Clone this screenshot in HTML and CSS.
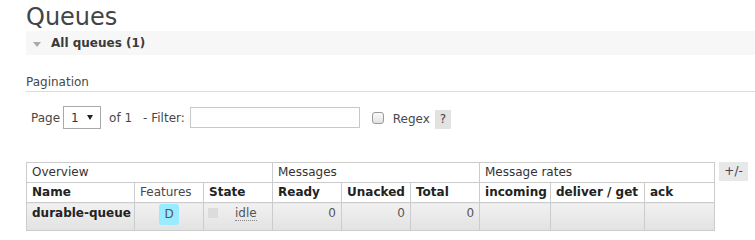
FILE: index.html
```html
<!DOCTYPE html>
<html lang="en">
<head>
    <meta charset="UTF-8">
    <title>Queues</title>
    <link rel="stylesheet" href="styles.css">
</head>
<body>
    <div id="main">
        <h1>Queues</h1>
        <div class="section">
            <h2 class="section-title"><span class="arrow"></span>All queues (1)</h2>
            <div class="hider">
                <h3>Pagination</h3>
                <div class="filter">
                    <span>Page</span>
                    <span class="select-wrap">
                        <select class="page-select">
                            <option>1</option>
                        </select>
                    </span>
                    <span class="of">of 1</span>
                    <span class="filter-label">- Filter:</span>
                    <input type="text" class="filter-input">
                    <input type="checkbox" class="regex-check" id="regex">
                    <label for="regex" class="regex-label">Regex</label>
                    <span class="help">?</span>
                </div>

                <div class="list-wrap">
                    <table class="list">
                        <colgroup>
                            <col class="c-name">
                            <col class="c-narrow">
                            <col class="c-narrow">
                            <col class="c-narrow">
                            <col class="c-narrow">
                            <col class="c-narrow">
                            <col class="c-incoming">
                            <col class="c-deliver">
                            <col class="c-ack">
                        </colgroup>
                        <thead>
                            <tr class="group-row">
                                <th colspan="3">Overview</th>
                                <th colspan="3">Messages</th>
                                <th colspan="3">Message rates</th>
                            </tr>
                            <tr class="head-row">
                                <th>Name</th>
                                <th class="plain">Features</th>
                                <th>State</th>
                                <th>Ready</th>
                                <th>Unacked</th>
                                <th>Total</th>
                                <th>incoming</th>
                                <th>deliver / get</th>
                                <th>ack</th>
                            </tr>
                        </thead>
                        <tbody>
                            <tr class="alt1">
                                <td class="name">durable-queue</td>
                                <td class="c"><abbr class="type" title="durable: true">D</abbr></td>
                                <td><span class="state-box"></span><abbr class="state" title="Idle since now">idle</abbr></td>
                                <td class="r">0</td>
                                <td class="r">0</td>
                                <td class="r">0</td>
                                <td></td>
                                <td></td>
                                <td></td>
                            </tr>
                        </tbody>
                    </table>
                    <span class="plus-minus">+/-</span>
                </div>
            </div>
        </div>
    </div>
</body>
</html>
```

FILE: styles.css
```css
* {
    box-sizing: border-box;
}

body {
    margin: 0;
    font-family: 'DejaVu Sans', Verdana, sans-serif;
    font-size: 12px;
    color: #484848;
    background-color: white;
}

#main {
    padding-left: 26px;
}

h1 {
    margin: 0;
    padding-top: 3px;
    font-size: 24px;
    line-height: 28px;
    font-weight: normal;
    color: #444;
}

.section-title {
    display: flex;
    align-items: center;
    margin: 0;
    height: 24px;
    padding-left: 7px;
    font-size: 12px;
    line-height: 24px;
    font-weight: bold;
    color: #3a3a3a;
    background-color: #f7f7f7;
}

.arrow {
    width: 0;
    height: 0;
    margin: 3px 10px 0 0;
    border-top: 5px solid #aaa;
    border-left: 4px solid transparent;
    border-right: 4px solid transparent;
}

h3 {
    margin: 20px 0 0;
    padding-bottom: 2px;
    font-size: 12px;
    line-height: 14px;
    font-weight: normal;
    color: #484848;
    border-bottom: 1px solid #ddd;
}

.filter {
    display: flex;
    align-items: center;
    margin-top: 14px;
    padding-left: 5px;
    height: 23px;
    line-height: 14px;
}

.select-wrap {
    position: relative;
    margin-left: 3px;
}

.page-select {
    appearance: none;
    -webkit-appearance: none;
    display: block;
    width: 38px;
    height: 23px;
    padding: 0 0 0 7px;
    border: 1px solid #aaa;
    border-radius: 0;
    background: white;
    font-family: inherit;
    font-size: 12px;
    color: #333;
}

.select-wrap::after {
    content: "";
    position: absolute;
    right: 8px;
    top: 9px;
    border-top: 5px solid #222;
    border-left: 3px solid transparent;
    border-right: 3px solid transparent;
}

.of {
    margin-left: 8px;
}

.filter-label {
    margin-left: 11px;
}

.filter-input {
    width: 170px;
    height: 21px;
    margin: 0 0 0 5px;
    border: 1px solid #c8c8c8;
    font-family: inherit;
    font-size: 12px;
}

.regex-check {
    appearance: none;
    -webkit-appearance: none;
    width: 12px;
    height: 12px;
    margin: 0 0 0 12px;
    border: 1px solid #999;
    border-radius: 3px;
    background: linear-gradient(#fafafa, #e2e2e2);
}

.regex-label {
    margin-left: 9px;
    margin-top: 3px;
}

.help {
    width: 16px;
    height: 19px;
    margin: 3px 0 0 5px;
    line-height: 19px;
    text-align: center;
    background-color: #e2e2e2;
    color: #444;
}

.list-wrap {
    display: flex;
    align-items: flex-start;
    gap: 4px;
    margin-top: 33px;
}

table.list {
    border-collapse: collapse;
    table-layout: fixed;
    width: 689px;
}

.c-name { width: 108px; }
.c-narrow { width: 69px; }
.c-incoming { width: 71px; }
.c-deliver { width: 94px; }
.c-ack { width: 70px; }

table.list th,
table.list td {
    border: 1px solid #ccc;
    padding: 2px 5px 3px;
    line-height: 14px;
    text-align: left;
    vertical-align: top;
    white-space: nowrap;
    overflow: hidden;
}

.group-row th {
    font-weight: normal;
    color: #333;
}

.head-row th {
    font-weight: bold;
    color: #222;
}

.head-row th.plain {
    font-weight: normal;
    color: #484848;
}

table.list tr.alt1 td {
    height: 28px;
    padding-top: 3px;
    background: linear-gradient(#f1f1f1, #e2e2e2);
}

table.list td.name {
    font-weight: bold;
    color: #222;
}

table.list td.c {
    text-align: center;
}

table.list td.r {
    text-align: right;
    color: #555;
}

abbr.type {
    display: inline-block;
    width: 20px;
    height: 21px;
    margin-top: -2px;
    line-height: 21px;
    text-align: center;
    text-decoration: none;
    border-radius: 3px;
    background-color: #99ebff;
    color: #555;
}

.state-box {
    display: inline-block;
    width: 10px;
    height: 10px;
    margin: 2px 0 0 -1px;
    vertical-align: top;
    background-color: #dcdcdc;
}

abbr.state {
    margin-left: 17px;
    text-decoration: none;
    border-bottom: 1px dotted #888;
    color: #555;
}

.plus-minus {
    width: 29px;
    height: 19px;
    line-height: 19px;
    text-align: center;
    background-color: #e8e8e8;
    color: #444;
}
```
